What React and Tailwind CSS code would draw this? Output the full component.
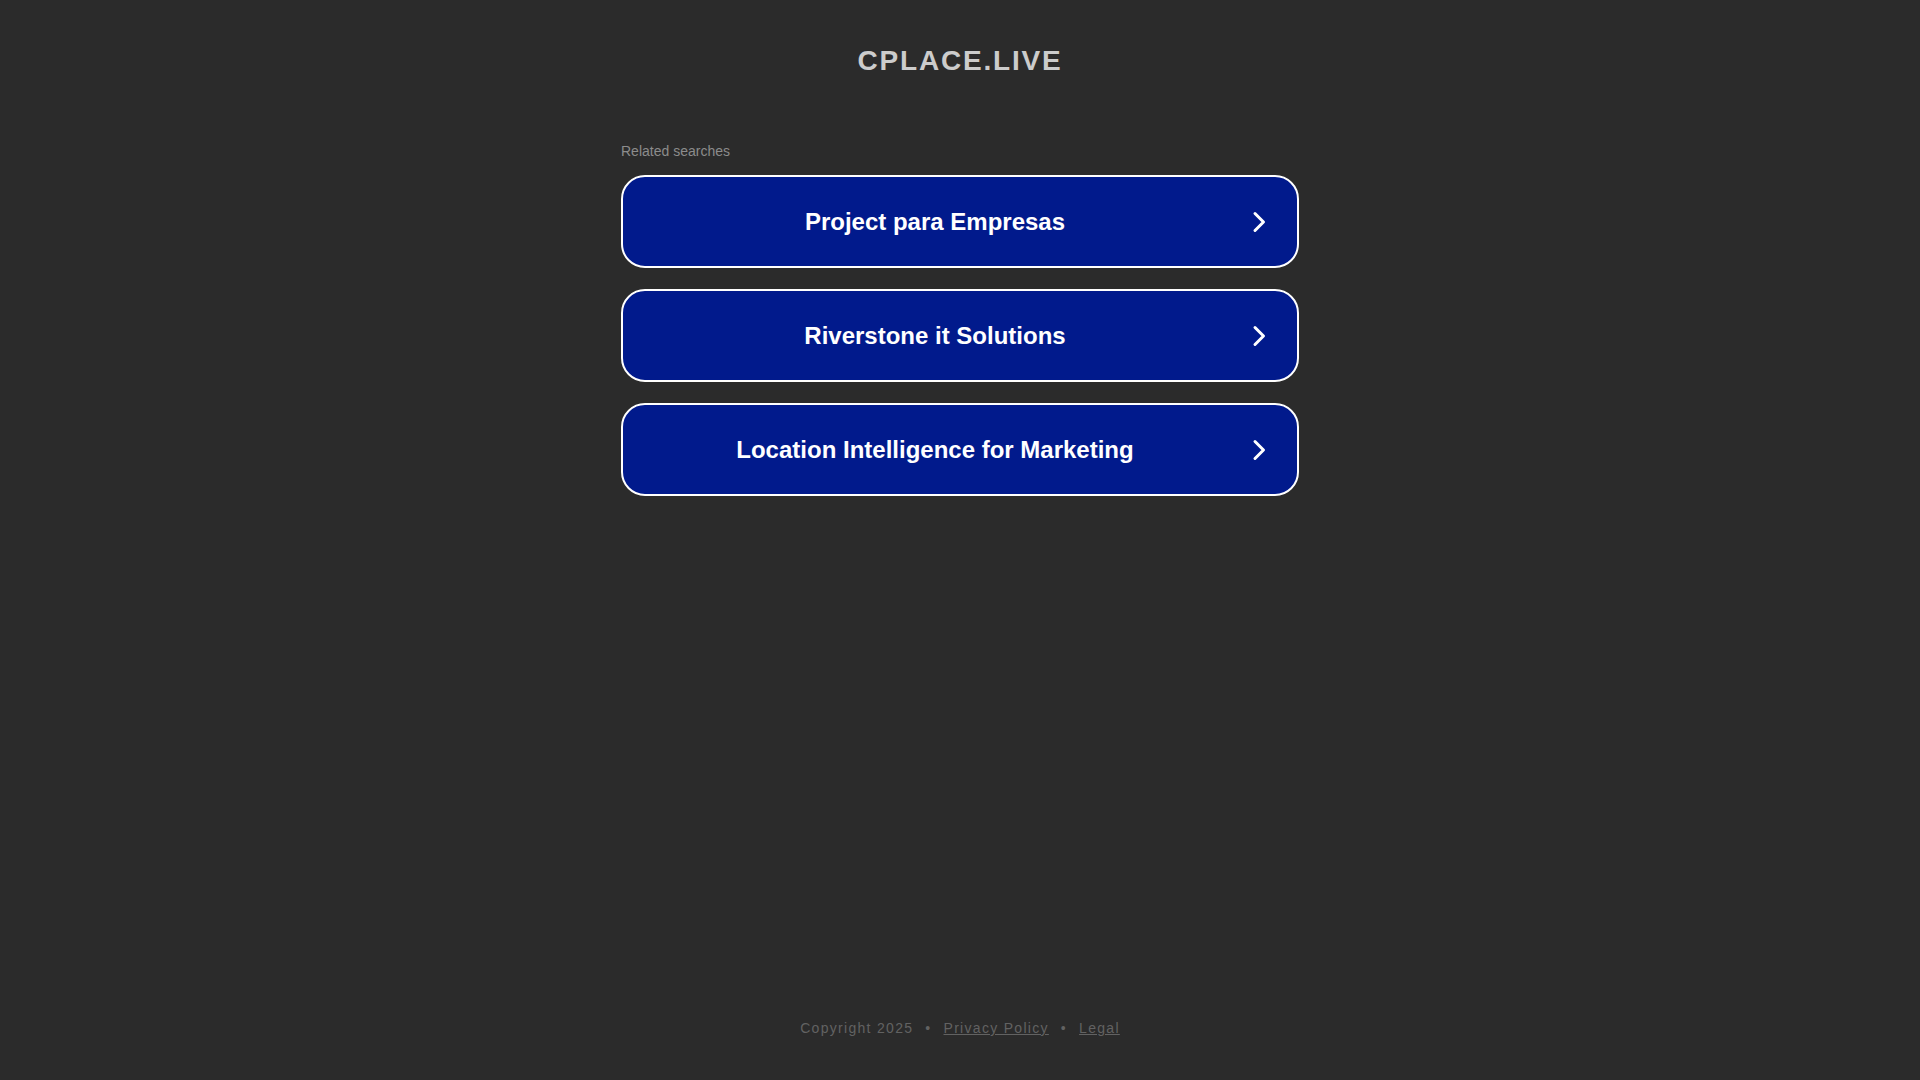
const links = [
  "Project para Empresas",
  "Riverstone it Solutions",
  "Location Intelligence for Marketing",
];

const Chevron = () => (
  <svg width="14" height="22" viewBox="0 0 14 22" fill="none" className="shrink-0">
    <polyline
      points="3,2.5 11.5,11 3,19.5"
      stroke="#ffffff"
      strokeWidth="3"
      strokeLinecap="round"
      strokeLinejoin="round"
    />
  </svg>
);

const App = () => {
  return (
    <div
      className="min-h-screen flex flex-col bg-[#2b2b2b]"
      style={{ fontFamily: '"Liberation Sans", Arial, sans-serif' }}
    >
      <main className="flex-1 flex flex-col items-center pt-[44px]">
        <h1 className="text-[28px] leading-[34px] font-bold tracking-[1.8px] text-[#cccccc]">
          CPLACE.LIVE
        </h1>

        <div className="w-[678px] mt-[65px]">
          <p className="text-[14px] leading-[16px] text-[#8c8c8c]">Related searches</p>

          <div className="mt-[16px] flex flex-col gap-[21px]">
            {links.map((label) => (
              <a
                key={label}
                href="#"
                className="h-[93px] flex items-center rounded-[24px] border-2 border-white bg-[#011a8c] text-white"
              >
                <span className="flex-1 text-center text-[24px] font-bold leading-[28px]">
                  {label}
                </span>
                <span className="w-[24px] mr-[26px] flex justify-center">
                  <Chevron />
                </span>
              </a>
            ))}
          </div>
        </div>
      </main>

      <footer className="pb-[44px] flex justify-center text-[14px] leading-[16px] tracking-[1.3px] text-[#626262]">
        <span>Copyright 2025</span>
        <span className="px-[12px]">•</span>
        <a href="#" className="underline">Privacy Policy</a>
        <span className="px-[12px]">•</span>
        <a href="#" className="underline">Legal</a>
      </footer>
    </div>
  );
};

export default App;
